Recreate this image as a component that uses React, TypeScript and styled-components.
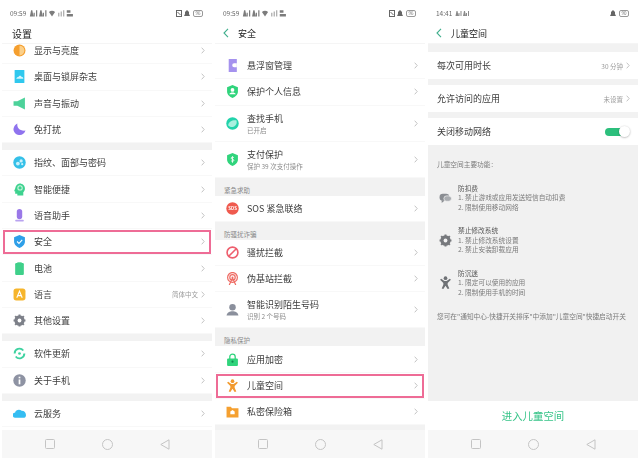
import React from "react";
import styled, {createGlobalStyle} from "styled-components";

const Global = createGlobalStyle`
    html, body {
        margin: 0;
        background: #fff;
    }
    body {
        font-family: "Noto Sans CJK SC", "Noto Sans", sans-serif;
        color: #3a3a3a;
    }
`;

/* icons */
const Svg = ({size = 13, children}: {size?: number; children: React.ReactNode}) =>
    <svg width={size} height={size} viewBox="0 0 24 24">{children}</svg>;

const Display = () => <Svg><circle cx="12" cy="12" r="11" fill="#f59f2e"/><path d="M12 3a9 9 0 0 1 0 18z" fill="#fbd08a"/></Svg>;
const Wallpaper = () => <Svg><rect x="3" y="0" width="18" height="24" rx="1" fill="#2fc8ee"/><path d="M6 16c1-3 3-3 4-3 1-3 5-3 6 0 2 0 3 1 3 3z" fill="#d5f4fc"/></Svg>;
const Sound = () => <Svg><path d="M1 8h7L22 1v22L8 16H1z" fill="#4dd29a"/></Svg>;
const Moon = () => <Svg><path d="M8 1c-1 8 4 14 15 13-2 6-7 9-12 8C4 21 0 15 1 10c1-4 4-8 7-9z" fill="#8f73ee"/></Svg>;
const Finger = () => <Svg><circle cx="12" cy="12" r="11.5" fill="#35c0e8"/><circle cx="9" cy="14" r="3.5" fill="#c9f1fb"/><circle cx="15" cy="9" r="3" fill="#c9f1fb"/><circle cx="17" cy="15" r="2" fill="#c9f1fb"/></Svg>;
const Smart = () => <Svg><path d="M12 1c6 0 10 4 10 9 0 3-1 5-3 7v6H8v-3H4v-5H2l2-5c1-5 4-9 8-9z" fill="#3ed28f"/><circle cx="13" cy="9" r="4" fill="none" stroke="#c9f5df" strokeWidth="2"/></Svg>;
const Mic = () => <Svg><rect x="7" y="0" width="10" height="19" rx="5" fill="#9a78e8"/><rect x="4" y="20" width="16" height="3" rx="1.5" fill="#b9a3f0"/></Svg>;
const Shield = () => <Svg><path d="M12 0l10 4v8c0 6-5 10-10 12C7 22 2 18 2 12V4z" fill="#2e9fe8"/><path d="M7.5 12l3.500 3.500 6-6.500" fill="none" stroke="#fff" strokeWidth="2"/></Svg>;
const Battery = () => <Svg><rect x="8" y="0" width="8" height="3" fill="#7be0ac"/><rect x="4" y="2" width="16" height="22" rx="2" fill="#3fd08a"/></Svg>;
const Lang = () => <Svg><rect x="1" y="1" width="22" height="22" rx="5" fill="#f6b52c"/><path d="M7 18l5-12 5 12M9 14h6" fill="none" stroke="#fff" strokeWidth="2"/></Svg>;
const Gear = ({color = "#7d8089", hole = "#fff"}: {color?: string; hole?: string}) => <Svg><circle cx="12" cy="12" r="7" fill="none" stroke={color} strokeWidth="5"/><path d="M12 1v22M1 12h22M4 4l16 16M20 4L4 20" stroke={color} strokeWidth="3.6"/><circle cx="12" cy="12" r="3.5" fill={hole}/></Svg>;
const Update = () => <Svg><path d="M3 12a9 9 0 0 1 16-5.500" fill="none" stroke="#3ed2a0" strokeWidth="3.5"/><path d="M21 12a9 9 0 0 1-16 5.500" fill="none" stroke="#3ed2a0" strokeWidth="3.5"/><circle cx="12" cy="12" r="2.5" fill="#3ed2a0"/></Svg>;
const About = () => <Svg><circle cx="12" cy="12" r="11.5" fill="#8e93a3"/><rect x="10.4" y="10" width="3.2" height="9" fill="#fff"/><rect x="10.4" y="5" width="3.2" height="3" fill="#fff"/></Svg>;
const Cloud = () => <Svg size={15}><path d="M5 20a5 5 0 0 1-1-10c1-5 8-7 12-3 5 0 8 4 8 8s-3 5-5 5z" fill="#35bdf2"/></Svg>;
const Floating = () => <Svg><path d="M5 0h15v24H5z" fill="#a592ee"/><path d="M20 8h-5a3 3 0 0 0 0 7h5z" fill="#fff"/></Svg>;
const Protect = () => <Svg><path d="M12 0l10 4v8c0 6-5 10-10 12C7 22 2 18 2 12V4z" fill="#30d47c"/><circle cx="12" cy="9" r="3.5" fill="#fff"/><path d="M6 17c1-4 11-4 12 0z" fill="#fff"/></Svg>;
const Find = () => <Svg><circle cx="12" cy="12" r="11.5" fill="#22d3ab"/><path d="M4 15C5 8 12 5 19 6c2 4 0 10-5 12-4 1-8 0-10-3z" fill="#a9f0df"/></Svg>;
const Pay = () => <Svg><path d="M12 0l10 4v8c0 6-5 10-10 12C7 22 2 18 2 12V4z" fill="#30d47c"/><path d="M14.500 8.500c-2-1.500-5-1-5 1 0 2.500 5 1.500 5 4 0 2-3 2.500-5 1M12 6v12" fill="none" stroke="#fff" strokeWidth="1.500"/></Svg>;
const Sos = () => <Svg><circle cx="12" cy="12" r="11.5" fill="#ef5a4e"/><text x="12" y="15" fontSize="8" fontWeight="700" fill="#fff" textAnchor="middle">SOS</text></Svg>;
const Block = () => <Svg><circle cx="12" cy="12" r="10" fill="none" stroke="#ee5f6e" strokeWidth="3"/><path d="M5 19L19 5" stroke="#ee5f6e" strokeWidth="3"/></Svg>;
const Tower = () => <Svg><circle cx="12" cy="10" r="9" fill="none" stroke="#ee6a62" strokeWidth="2.2"/><circle cx="12" cy="10" r="5" fill="none" stroke="#ee6a62" strokeWidth="2.2"/><circle cx="12" cy="10" r="1.8" fill="#ee6a62"/><path d="M12 11L6 24M12 11l6 13" stroke="#ee6a62" strokeWidth="2.2"/></Svg>;
const Stranger = () => <Svg><circle cx="12" cy="8" r="6" fill="#8a8f9c"/><path d="M1 23c1-6 6-8 11-8s10 2 11 8z" fill="#8a8f9c"/></Svg>;
const Lock = () => <Svg><path d="M7 11V7a5 5 0 0 1 10 0v4" fill="none" stroke="#30d47c" strokeWidth="2.4"/><rect x="2" y="10" width="20" height="14" rx="2" fill="#30d47c"/><circle cx="12" cy="16" r="2" fill="#128a50"/></Svg>;
const Child = ({color = "#f29a2e"}: {color?: string}) => <Svg><circle cx="12" cy="4" r="3.4" fill={color}/><path d="M2 7l2-2 6 4h4l6-4 2 2-6 6v3l3 7-3 1-4-6-4 6-3-1 3-7v-3z" fill={color}/></Svg>;
const Safe = () => <Svg><path d="M1 3h8l2 3h12v17H1z" fill="#f5a030"/><path d="M8 17v-5l4-3 4 3v5z" fill="#fff"/></Svg>;
const Chat = () => <Svg><rect x="1" y="5" width="18" height="13" rx="6" fill="#8a8d92"/><rect x="9" y="9" width="14" height="10" rx="5" fill="#a9acb0" stroke="#f1f1f1" strokeWidth="1.4"/><path d="M5 17v5l5-4z" fill="#8a8d92"/></Svg>;

const SignalPair = () => <svg width="17" height="7" viewBox="0 0 14 7"><path d="M0 6l1-5h1l1 5zM3 6V3h1v3zM5 6V1h1v5zM7.500 6l1-5h1l1 5zM10.500 6V3h1v3zM12.500 6V1h1v5z" fill="#8a8a8a"/></svg>;

const StatusIcons = () => <svg width="48" height="8" viewBox="0 0 36 6.500">
    <path d="M0 6l1-5h1l1 5zM3 6V3h1v3zM5 6V1h1v5zM7.500 6l1-5h1l1 5zM10.500 6V3h1v3zM12.500 6V1h1v5z" fill="#7c7c7c"/>
    <path d="M15.500 2.500a4 4 0 0 1 5 0L18 6z" fill="#7c7c7c"/>
    <path d="M23 6V3h1v3zM25 6V2h1v4zM27 6V1h1v5z" fill="#aaa"/>
    <path d="M30 1h3v2h-3zM30 4h5v2h-5z" fill="#7c7c7c"/>
</svg>;

const Bell = () => <svg width="6" height="7" viewBox="0 0 6 7"><path d="M3 0l2 2v2l1 2H0l1-2V2z" fill="#666"/></svg>;
const Nfc = () => <svg width="6" height="7" viewBox="0 0 6 7"><rect x="0.500" y="0.500" width="5" height="6" fill="none" stroke="#666"/><path d="M1.500 2l3 3" stroke="#666"/></svg>;

const Chevron = () => <svg width="4" height="7" viewBox="0 0 4 7"><path d="M0.700 0.700L3.200 3.500L0.700 6.300" fill="none" stroke="#b5b5b5" strokeWidth="0.800"/></svg>;
const Back = () => <svg width="6" height="10" viewBox="0 0 6 10"><path d="M5 0.800L1 5l4 4.200" fill="none" stroke="#3fae8c" strokeWidth="1.100"/></svg>;
const NavSquare = () => <svg width="10" height="10" viewBox="0 0 10 10"><rect x="0.500" y="0.500" width="9" height="9" rx="1" fill="none" stroke="#c4c4c4"/></svg>;
const NavCircle = () => <svg width="11" height="11" viewBox="0 0 11 11"><circle cx="5.500" cy="5.500" r="5" fill="none" stroke="#c4c4c4"/></svg>;
const NavBack = () => <svg width="10" height="11" viewBox="0 0 10 11"><path d="M9 0.800V10.200L0.800 5.500z" fill="none" stroke="#c4c4c4"/></svg>;

const Page = styled.div`
    width: 640px;
    height: 458px;
    padding: 0 2px;
    box-sizing: border-box;
    display: grid;
    grid-template-columns: repeat(3, 1fr);
    column-gap: 3px;
    overflow: hidden;
    filter: blur(0.35px);
`;

const Phone = styled.div`
    display: flex;
    flex-direction: column;
    height: 458px;
    min-width: 0;
`;

const StatusBar = styled.div`
    height: 23px;
    box-sizing: border-box;
    padding: 3px 9px 0 8px;
    flex: none;
    display: flex;
    align-items: center;
    justify-content: space-between;
    font-size: 6.500px;
    color: #666;
`;

const StatusGroup = styled.div`
    display: flex;
    align-items: center;
    gap: 1.500px;
`;

const BatBox = styled.span`
    border: 0.7px solid #999;
    border-radius: 2px;
    padding: 0 1.500px;
    font-size: 4.500px;
    line-height: 5px;
    margin-left: 2px;
    color: #777;
`;

const Header = styled.div<{$large?: boolean}>`
    height: 21px;
    box-sizing: border-box;
    flex: none;
    display: flex;
    align-items: center;
    gap: 9px;
    padding-left: ${p => p.$large ? 10 : 8}px;
    font-size: ${p => p.$large ? 10 : 9}px;
    color: #222;
    border-bottom: 1px solid #f5f5f5;
`;

const List = styled.div`
    flex: 1;
    min-height: 0;
    overflow: hidden;
    display: flex;
    flex-direction: column;
`;

const Row = styled.div<{$tall?: boolean; $marked?: boolean; $lift?: number}>`
    flex: none;
    height: ${p => p.$tall ? 36 : 26.300}px;
    margin-top: ${p => p.$lift ?? 0}px;
    box-sizing: border-box;
    display: flex;
    align-items: center;
    padding: 0 7px 0 11px;
    border-bottom: 1px solid #f8f8f8;
    outline: ${p => p.$marked ? "2px solid #ee6c96" : "none"};
    outline-offset: -3px;
`;

const IconSlot = styled.div`
    width: 13px;
    height: 13px;
    flex: none;
    margin-right: 8px;
    display: flex;
    align-items: center;
    justify-content: center;
`;

const RowText = styled.div`
    flex: 1;
    min-width: 0;
    display: flex;
    flex-direction: column;
`;

const RowTitle = styled.span<{$withSub?: boolean}>`
    font-size: 9px;
    line-height: ${p => p.$withSub ? 13 : 11}px;
    color: #3c3c3c;
    white-space: nowrap;
`;

const RowSub = styled.span`
    font-size: 6.500px;
    line-height: 10px;
    color: #8c8c8c;
`;

const RowValue = styled.span`
    font-size: 6.500px;
    color: #9a9a9a;
    margin-right: 3px;
`;

const Gap = styled.div<{$h: number}>`
    flex: none;
    height: ${p => p.$h}px;
    background: #f2f2f2;
`;

const Section = styled.div`
    flex: none;
    height: 18px;
    box-sizing: border-box;
    background: #f2f2f2;
    padding: 7px 0 0 9px;
    font-size: 6.500px;
    line-height: 10px;
    color: #8a8a8a;
`;

const Plain = styled(Row)`
    height: 27px;
    padding: 0 8px 0 9px;
    border-bottom: none;
`;

const Toggle = styled.div`
    position: relative;
    width: 24px;
    height: 8px;
    border-radius: 4px;
    background: #2cbf7c;
    margin-right: 1px;
    &::after {
        content: "";
        position: absolute;
        right: -1px;
        top: -2px;
        width: 11px;
        height: 11px;
        border-radius: 50%;
        background: #fff;
        box-shadow: 0 0.500px 2px rgba(0, 0, 0, 0.35);
    }
`;

const Info = styled.div`
    flex: 1;
    min-height: 0;
    background: #f1f1f1;
    padding: 15px 0 0 9px;
    font-size: 6.700px;
    line-height: 9.500px;
    color: #7b7b7b;
`;

const Feature = styled.div`
    display: grid;
    grid-template-columns: 12px 1fr;
    column-gap: 7px;
    align-items: center;
    margin: 14px 0 0 2px;
`;

const FeatureTitle = styled.div`
    color: #555;
`;

const InfoNote = styled.div`
    margin-top: 15px;
    white-space: nowrap;
`;

const Enter = styled.div`
    height: 29px;
    flex: none;
    display: flex;
    align-items: center;
    justify-content: center;
    font-size: 10.400px;
    color: #38c489;
`;

const Nav = styled.div`
    height: 28px;
    flex: none;
    background: #f7f7f7;
    display: flex;
    align-items: center;
    justify-content: center;
    gap: 47px;
`;

type Item = {
    icon?: React.ReactNode;
    title: string;
    sub?: string;
    value?: string;
    marked?: boolean;
    lift?: number;
};

const ListRow = ({icon, title, sub, value, marked, lift}: Item) =>
    <Row $tall={!!sub} $marked={marked} $lift={lift}>
        <IconSlot>{icon}</IconSlot>
        <RowText>
            <RowTitle $withSub={!!sub}>{title}</RowTitle>
            {sub ? <RowSub>{sub}</RowSub> : null}
        </RowText>
        {value ? <RowValue>{value}</RowValue> : null}
        <Chevron/>
    </Row>;

const Status = ({time, full}: {time: string; full?: boolean}) =>
    <StatusBar>
        <StatusGroup>
            {time}
            {full ? <StatusIcons/> : <SignalPair/>}
        </StatusGroup>
        <StatusGroup>
            {full ? <Nfc/> : null}
            <Bell/>
            <BatBox>{full ? "96" : "90"}</BatBox>
        </StatusGroup>
    </StatusBar>;

const BottomNav = () =>
    <Nav>
        <NavSquare/>
        <NavCircle/>
        <NavBack/>
    </Nav>;

const App = () => <>
    <Global/>
    <Page>
        <Phone>
            <Status time="09:59" full/>
            <Header $large>设置</Header>
            <List>
                <ListRow icon={<Display/>} title="显示与亮度" lift={-6}/>
                <ListRow icon={<Wallpaper/>} title="桌面与锁屏杂志"/>
                <ListRow icon={<Sound/>} title="声音与振动"/>
                <ListRow icon={<Moon/>} title="免打扰"/>
                <Gap $h={7}/>
                <ListRow icon={<Finger/>} title="指纹、面部与密码"/>
                <ListRow icon={<Smart/>} title="智能便捷"/>
                <ListRow icon={<Mic/>} title="语音助手"/>
                <ListRow icon={<Shield/>} title="安全" marked/>
                <ListRow icon={<Battery/>} title="电池"/>
                <ListRow icon={<Lang/>} title="语言" value="简体中文"/>
                <ListRow icon={<Gear/>} title="其他设置"/>
                <Gap $h={7}/>
                <ListRow icon={<Update/>} title="软件更新"/>
                <ListRow icon={<About/>} title="关于手机"/>
                <Gap $h={7}/>
                <ListRow icon={<Cloud/>} title="云服务"/>
            </List>
            <BottomNav/>
        </Phone>
        <Phone>
            <Status time="09:59" full/>
            <Header><Back/>安全</Header>
            <List>
                <ListRow icon={<Floating/>} title="悬浮窗管理" lift={9}/>
                <ListRow icon={<Protect/>} title="保护个人信息"/>
                <ListRow icon={<Find/>} title="查找手机" sub="已开启"/>
                <ListRow icon={<Pay/>} title="支付保护" sub="保护 39 次支付操作"/>
                <Section>紧急求助</Section>
                <ListRow icon={<Sos/>} title="SOS 紧急联络"/>
                <Section>防骚扰诈骗</Section>
                <ListRow icon={<Block/>} title="骚扰拦截"/>
                <ListRow icon={<Tower/>} title="伪基站拦截"/>
                <ListRow icon={<Stranger/>} title="智能识别陌生号码" sub="识别 2 个号码"/>
                <Section>隐私保护</Section>
                <ListRow icon={<Lock/>} title="应用加密"/>
                <ListRow icon={<Child/>} title="儿童空间" marked/>
                <ListRow icon={<Safe/>} title="私密保险箱"/>
                <Gap $h={6}/>
            </List>
            <BottomNav/>
        </Phone>
        <Phone>
            <Status time="14:41"/>
            <Header><Back/>儿童空间</Header>
            <List>
                <Gap $h={8}/>
                <Plain><RowText><RowTitle>每次可用时长</RowTitle></RowText><RowValue>30 分钟</RowValue><Chevron/></Plain>
                <Gap $h={6}/>
                <Plain><RowText><RowTitle>允许访问的应用</RowTitle></RowText><RowValue>未设置</RowValue><Chevron/></Plain>
                <Gap $h={6}/>
                <Plain><RowText><RowTitle>关闭移动网络</RowTitle></RowText><Toggle/></Plain>
                <Info>
                    儿童空间主要功能：
                    <Feature>
                        <Chat/>
                        <div><FeatureTitle>防扣费</FeatureTitle>1. 禁止游戏或应用发送短信自动扣费<br/>2. 限制使用移动网络</div>
                    </Feature>
                    <Feature>
                        <Gear color="#77797d" hole="#f1f1f1"/>
                        <div><FeatureTitle>禁止修改系统</FeatureTitle>1. 禁止修改系统设置<br/>2. 禁止安装卸载应用</div>
                    </Feature>
                    <Feature>
                        <Child color="#6f7276"/>
                        <div><FeatureTitle>防沉迷</FeatureTitle>1. 限定可以使用的应用<br/>2. 限制使用手机的时间</div>
                    </Feature>
                    <InfoNote>您可在"通知中心-快捷开关排序"中添加"儿童空间"快捷启动开关</InfoNote>
                </Info>
                <Enter>进入儿童空间</Enter>
            </List>
            <BottomNav/>
        </Phone>
    </Page>
</>;

export default App;
